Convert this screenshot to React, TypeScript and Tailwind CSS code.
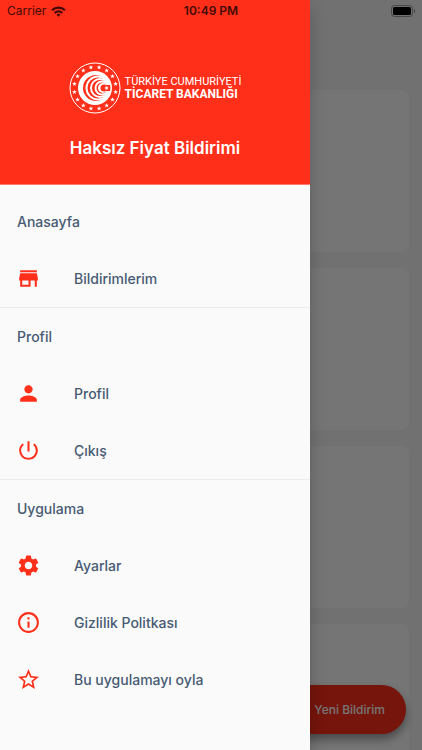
import type { IconType } from "react-icons";
import {
  MdAdd,
  MdInfoOutline,
  MdPerson,
  MdPowerSettingsNew,
  MdSettings,
  MdStarBorder,
  MdStore,
} from "react-icons/md";

type Item = { label: string; icon: IconType };
type Section = { title: string; items: Item[] };

const sections: Section[] = [
  { title: "Anasayfa", items: [{ label: "Bildirimlerim", icon: MdStore }] },
  {
    title: "Profil",
    items: [
      { label: "Profil", icon: MdPerson },
      { label: "Çıkış", icon: MdPowerSettingsNew },
    ],
  },
  {
    title: "Uygulama",
    items: [
      { label: "Ayarlar", icon: MdSettings },
      { label: "Gizlilik Politkası", icon: MdInfoOutline },
      { label: "Bu uygulamayı oyla", icon: MdStarBorder },
    ],
  },
];

// five pointed star around a centre
const starPoints = (cx: number, cy: number, r: number, turn = -90) =>
  Array.from({ length: 10 }, (_, i) => {
    const a = ((turn + i * 36) * Math.PI) / 180;
    const d = i % 2 ? r * 0.42 : r;
    return `${(cx + d * Math.cos(a)).toFixed(2)},${(cy + d * Math.sin(a)).toFixed(2)}`;
  }).join(" ");

const Emblem = () => {
  return (
    <svg viewBox="0 0 104 104" className="size-[52px] shrink-0" aria-hidden="true">
      <circle cx="52" cy="52" r="50" fill="none" stroke="#fff" strokeWidth="2" />
      {Array.from({ length: 16 }, (_, i) => {
        const a = ((i * 22.5 + 11.25) * Math.PI) / 180;
        return (
          <polygon
            key={i}
            fill="#fff"
            points={starPoints(52 + 42 * Math.cos(a), 52 + 42 * Math.sin(a), 4.8)}
          />
        );
      })}
      <circle cx="52" cy="52" r="34" fill="#fff" />
      {/* nested crescents, all opening to the right */}
      <circle cx="54" cy="52" r="26" fill="#ff2f1a" />
      <circle cx="58" cy="52" r="25" fill="#fff" />
      <circle cx="58" cy="52" r="21" fill="#ff2f1a" />
      <circle cx="62" cy="52" r="20" fill="#fff" />
      <circle cx="62" cy="52" r="16" fill="#ff2f1a" />
      <circle cx="66" cy="52" r="15" fill="#fff" />
      <circle cx="66" cy="52" r="11" fill="#ff2f1a" />
      <circle cx="68" cy="52" r="10" fill="#fff" />
      <circle cx="70" cy="52" r="7" fill="#ff2f1a" />
      <path d="M72 46l10 0 1 6-1 6h-10z" fill="#ff2f1a" />
      <polygon points={starPoints(75, 52, 5, 180)} fill="#fff" />
    </svg>
  );
};

const StatusBar = () => {
  return (
    <div className="absolute inset-x-0 top-0 z-20 flex h-[22px] items-center justify-between pr-1.5 pl-[7px] text-[#420c06]">
      <div className="flex items-center gap-[5px]">
        <span className="text-[12px] font-normal">Carrier</span>
        <svg viewBox="0 0 30 22" className="h-[11px] w-[15px]" aria-hidden="true">
          <g fill="none" stroke="currentColor" strokeWidth="4.5">
            <path d="M2 8.5a18.500 18.500 0 0 1 26 0" />
            <path d="M7.500 14a10.800 10.800 0 0 1 15 0" />
          </g>
          <path d="M15 21.500l-4-4.200a5.800 5.800 0 0 1 8 0z" fill="currentColor" />
        </svg>
      </div>
      <span className="absolute left-1/2 -translate-x-1/2 text-[12px] font-semibold">
        10:49 PM
      </span>
      <svg viewBox="0 0 25 12" className="h-3 w-[25px]" aria-hidden="true">
        <rect x="0.500" y="0.500" width="21" height="11" rx="3" fill="none" stroke="#474747" />
        <rect x="2" y="2" width="18" height="8" rx="1.500" fill="#000" />
        <path d="M23 4v4a2.200 2.200 0 0 0 0-4z" fill="#474747" />
      </svg>
    </div>
  );
};

const Drawer = () => {
  return (
    <aside className="absolute inset-y-0 left-0 z-10 w-[310px] bg-[#fafafa] shadow-[0_8px_16px_rgba(0,0,0,0.2)]">
      <header className="flex h-[185px] flex-col items-center border-b border-[#ff7a6c] bg-[#ff2f1a] pt-[62px] text-white">
        <div className="flex items-center gap-1">
          <Emblem />
          <div className="font-[Roboto,sans-serif] whitespace-nowrap">
            <p className="text-[11px] leading-[13px] font-normal">TÜRKİYE CUMHURİYETİ</p>
            <p className="text-[12px] leading-[13px] font-bold">TİCARET BAKANLIĞI</p>
          </div>
        </div>
        <h1 className="mt-6 text-[17px] leading-5 font-semibold">Haksız Fiyat Bildirimi</h1>
      </header>
      <nav className="divide-y divide-[#ebebeb] pt-2">
        {sections.map((section) => (
          <section key={section.title}>
            <h2 className="flex h-[57px] items-center px-[17px]">{section.title}</h2>
            {section.items.map(({ label, icon: Icon }) => (
              <a key={label} href="#" className="flex h-[57px] items-center gap-[33px] px-4">
                <Icon className="size-[25px] text-[#ff2f1a]" />
                {label}
              </a>
            ))}
          </section>
        ))}
      </nav>
    </aside>
  );
};

const App = () => {
  return (
    <div className="relative h-screen overflow-hidden bg-[#f7f7f7] font-[Inter,sans-serif] text-[14px] leading-5 font-medium text-[#475a73]">
      <main className="flex flex-col gap-4 px-[13px] pt-[90px]">
        {[1, 2, 3, 4].map((card) => (
          <div key={card} className="h-[162px] shrink-0 rounded-lg bg-white" />
        ))}
      </main>
      <button className="absolute right-4 bottom-4 flex h-[49px] items-center gap-2 rounded-full bg-[#ff2f1a] pr-[21px] pl-4 text-[12px] text-white shadow-[0_5px_10px_rgba(0,0,0,0.4)]">
        <MdAdd className="size-6" />
        Yeni Bildirim
      </button>
      {/* scrim */}
      <div className="absolute inset-0 bg-black/54" />
      <Drawer />
      <StatusBar />
    </div>
  );
};

export default App;
